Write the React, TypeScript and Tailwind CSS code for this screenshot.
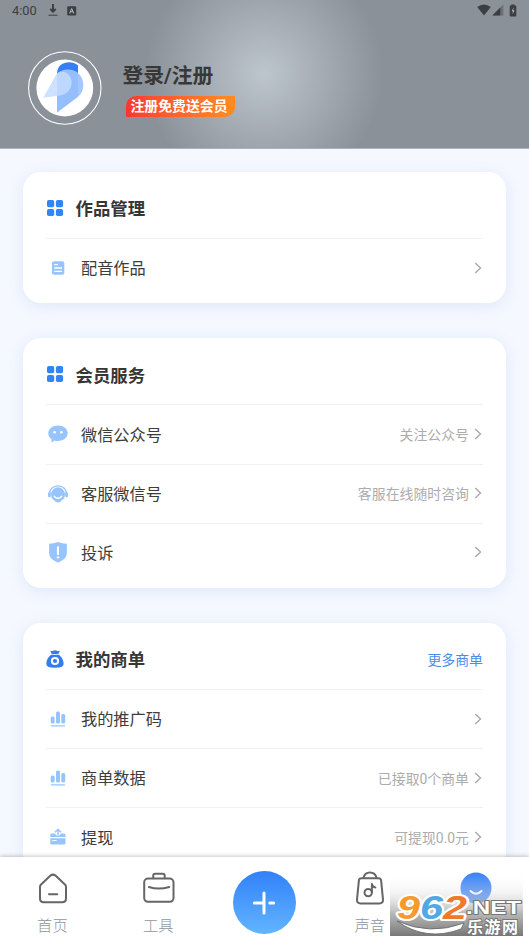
import { ReactNode } from 'react';

type IconProps = { className?: string };

const BLUE = '#2f86fb';
const LIGHT = '#98c4fd';

function GridIcon() {
  return (
    <svg width="18" height="18" viewBox="0 0 18 18" fill={BLUE} className="-mt-0.5">
      <rect x="1" y="1" width="7.2" height="7.2" rx="1.8" />
      <rect x="9.9" y="1" width="7.2" height="7.2" rx="1.8" />
      <rect x="1" y="9.9" width="7.2" height="7.2" rx="1.8" />
      <rect x="9.9" y="9.9" width="7.2" height="7.2" rx="1.8" />
    </svg>
  );
}

function MoneyBagIcon() {
  return (
    <svg width="18" height="18" viewBox="0 0 18 18" className="-mt-0.5">
      <path d="M4.2 .8Q6 1.3 7 .8Q9 -.1 11 .8Q12 1.3 14 .8L12.3 4H5.7Z" fill="#347df0" />
      <path d="M5.2 4.8H12.8C15.6 6.6 17.8 10.5 17.6 14.2Q17.5 17.8 9 17.8T.4 14.2C.2 10.5 2.4 6.6 5.2 4.8Z" fill="#347df0" />
      <circle cx="9" cy="11" r="3.1" fill="none" stroke="#fff" strokeWidth="2" />
    </svg>
  );
}

function DocIcon() {
  return (
    <svg width="20" height="20" viewBox="0 0 20 20" className="-mt-px">
      <rect x="4" y="3.2" width="12.3" height="13.6" rx="2" fill={LIGHT} />
      <path d="M6.2 6.6H9.8M6.2 10H14M6.2 13.3H14" stroke="#fff" strokeWidth="1.3" />
    </svg>
  );
}

function ChatIcon() {
  return (
    <svg width="20" height="20" viewBox="0 0 20 20">
      <path d="M10 1.6C15.5 1.6 19.7 5 19.7 9.3S15.5 17 10 17Q8.2 17 6.6 16.5L3.3 18.5L3.6 15.2Q.3 12.9 .3 9.3C.3 5 4.5 1.6 10 1.6Z" fill={LIGHT} />
      <circle cx="6.6" cy="8.3" r="1.3" fill="#fff" />
      <circle cx="13.4" cy="8.3" r="1.3" fill="#fff" />
    </svg>
  );
}

function ServiceIcon() {
  return (
    <svg width="20" height="20" viewBox="0 0 20 20">
      <path d="M1.5 10.5C1.2 5.2 5 1.8 10 1.8S18.8 5.2 18.5 10.5" fill="none" stroke={LIGHT} strokeWidth="1.3" />
      <rect x="0" y="8.3" width="2.8" height="5" rx="1.2" fill={LIGHT} />
      <rect x="17.2" y="8.3" width="2.8" height="5" rx="1.2" fill={LIGHT} />
      <path d="M10 3.2A7.2 7.2 0 0 1 17 10.4Q17 14.2 13.8 16.3Q12.6 18.5 10 18.5T6.2 16.3Q3 14.2 3 10.4A7.2 7.2 0 0 1 10 3.2Z" fill={LIGHT} />
      <path d="M6.4 12.4Q10 16.2 13.6 12.4" fill="none" stroke="#fff" strokeWidth="1.5" strokeLinecap="round" />
    </svg>
  );
}

function ShieldIcon() {
  return (
    <svg width="20" height="22" viewBox="0 0 20 22" className="-mt-0.5">
      <path d="M10 .9Q14 2.5 18.9 2.8V11.5C18.9 16.5 15.2 19.7 10 21.4C4.8 19.7 1.1 16.5 1.1 11.5V2.8Q6 2.5 10 .9Z" fill={LIGHT} />
      <rect x="8.9" y="5.2" width="2.1" height="8.8" rx=".8" fill="#fff" />
      <circle cx="10" cy="16.4" r="1.2" fill="#fff" />
    </svg>
  );
}

function ChartIcon() {
  return (
    <svg width="20" height="20" viewBox="0 0 20 20" fill={LIGHT} className="-mt-px">
      <rect x="2.7" y="7.4" width="3.9" height="7.2" rx="1.5" />
      <rect x="8" y="2.5" width="4" height="12.1" rx="1.5" />
      <rect x="13.3" y="5" width="3.9" height="9.6" rx="1.5" />
      <rect x="2.7" y="16.3" width="14.4" height="1.2" rx=".4" />
    </svg>
  );
}

function WithdrawIcon() {
  return (
    <svg width="20" height="20" viewBox="0 0 20 20" className="-mt-px">
      <path d="M2.3 10V7.8Q2.3 6.4 3.8 6.4H7.5V7.5Q10 10.2 12.5 7.5V6.4H16Q17.5 6.4 17.5 7.8V10Z" fill={LIGHT} />
      <path d="M10 8.5V3M6.9 5.3L10 2.4L13.1 5.3" fill="none" stroke={LIGHT} strokeWidth="1.4" />
      <path d="M2.3 11.3H17.5V16.2Q17.5 17.6 16 17.6H3.8Q2.3 17.6 2.3 16.2Z" fill={LIGHT} />
      <path d="M4.3 13.5H8.6" stroke="#fff" strokeWidth="1" />
    </svg>
  );
}

function Chevron() {
  return (
    <svg width="8" height="12" viewBox="0 0 8 12" className="-mt-px mr-px ml-[5px]">
      <path d="M1.2 1L6.5 6L1.2 11" fill="none" stroke="#a9a9a9" strokeWidth="1.4" />
    </svg>
  );
}

interface RowData {
  label: string;
  icon: ReactNode;
  value?: string;
}

interface SectionProps {
  title: string;
  icon: ReactNode;
  rows: RowData[];
  action?: string;
}

function Section({ title, icon, rows, action }: SectionProps) {
  return (
    <section className="rounded-[18px] bg-white px-[23px] pb-[5.8px] shadow-[0_3px_16px_rgba(70,115,220,0.13)]">
      <div className="flex h-[66.2px] items-center pt-[7.5px]">
        <span className="flex w-[18px] shrink-0">{icon}</span>
        <h2 className="ml-[11.5px] flex-1 pt-px text-[17.4px] leading-6 font-bold text-[#363636]">{title}</h2>
        {action && <a className="text-[13.9px] leading-5 text-[#4a8ce6]">{action}</a>}
      </div>
      {rows.map((row) => (
        <div key={row.label} className="flex h-[59.2px] items-center border-t border-[#f1f1f1]">
          <span className="ml-0.5 flex w-5 shrink-0 justify-center">{row.icon}</span>
          <span className="ml-[13px] flex-1 pt-[2.4px] text-[16.2px] leading-6 text-[#3c3c3c]">{row.label}</span>
          {row.value && <span className="pt-px text-[13.9px] leading-5 text-[#acacac]">{row.value}</span>}
          <Chevron />
        </div>
      ))}
    </section>
  );
}

function StatusBar() {
  return (
    <div className="flex h-[22px] items-center px-3 text-[#3b3e42]">
      <span className="font-[Roboto] text-[12.8px] leading-none">4:00</span>
      <svg width="10" height="12" viewBox="0 0 10 12" className="-mt-0.5 ml-[11px]">
        <path d="M5 0V7M2.3 5L5 7.7L7.7 5" fill="none" stroke="currentColor" strokeWidth="1.9" />
        <path d="M.5 11.2H9.5" stroke="currentColor" />
      </svg>
      <svg width="10" height="10" viewBox="0 0 10 10" className="-mt-px ml-[9px]">
        <rect x=".2" y=".2" width="9" height="9.2" rx="1.2" fill="currentColor" />
        <path d="M2.6 7.5L4.7 2.5L6.8 7.5M3.4 5.8H6" fill="none" stroke="#b6bbc0" />
      </svg>
      <div className="-mt-0.5 ml-auto flex items-center">
        <svg width="14" height="12" viewBox="0 0 14 12">
          <path d="M.2 3Q7 -2.2 13.8 3L7 11.5Z" fill="currentColor" />
        </svg>
        <svg width="12" height="12" viewBox="0 0 12 12" className="ml-px">
          <path d="M.3 11.5L11.3 .5V11.5Z" fill="#6c7178" />
          <path d="M.3 11.5L8.3 3.5V11.5Z" fill="currentColor" />
        </svg>
        <svg width="8" height="13" viewBox="0 0 8 13" className="ml-[5px]">
          <path d="M2.2 .4H5.5V1.5H6.5Q7.3 1.5 7.3 2.3V11.5Q7.3 12.4 6.4 12.4H1.5Q.7 12.4 .7 11.5V2.3Q.7 1.5 1.5 1.5H2.2Z" fill="currentColor" />
          <path d="M4.7 3.5L2.7 7.3H4L3.4 10.3L5.5 6.4H4.2Z" fill="#c0c4c8" />
        </svg>
      </div>
    </div>
  );
}

function Avatar() {
  return (
    <svg width="74" height="74" viewBox="0 0 74 74">
      <circle cx="36.8" cy="37" r="36.2" fill="none" stroke="#fff" strokeWidth="1.1" />
      <circle cx="36.8" cy="37" r="28.4" fill="#fff" />
      <path d="M29 30V22C29.5 14.5 35 11.2 41 11.2Q46 11.2 50 14.5V30Z" fill="#347ff6" />
      <path d="M29 61.5V22.5C37 16 49 17.5 53.8 27C57 35 55 42 49 46.5Z" fill="#a3c7fe" />
      <path d="M29 22.5Q38 16.5 50 21.5V45.8L29 61.5Z" fill="#8fbafc" opacity=".7" />
      <path d="M15.3 46.7L26.3 27C27.5 24.5 29 22.5 30.5 21.5C37 19 43.7 24 43.7 31.5Q43.2 42.5 32 44.5Z" fill="#c6dcff" opacity=".85" />
    </svg>
  );
}

function HomeIcon() {
  return (
    <svg width="32" height="34" viewBox="0 0 32 34" fill="none" stroke="#666" strokeWidth="2" strokeLinecap="round" strokeLinejoin="round">
      <path d="M13.5 3.6Q16 1.7 18.5 3.6L28.2 12.7Q29 13.5 29 15V26.5Q29 30.3 25.2 30.3H6.8Q3 30.3 3 26.5V15Q3 13.5 3.8 12.7Z" />
      <path d="M12 22.2H20.3" />
    </svg>
  );
}

function ToolIcon() {
  return (
    <svg width="34" height="34" viewBox="0 0 34 34" fill="none" stroke="#666" strokeWidth="2" strokeLinecap="round">
      <rect x="2.2" y="6.5" width="29.3" height="23.3" rx="3.8" />
      <path d="M11.2 6.2V3.7Q11.2 1.7 13.2 1.7H20.7Q22.7 1.7 22.7 3.7V6.2" />
      <path d="M6.9 15Q16.8 18.2 27.2 15" />
    </svg>
  );
}

function SoundIcon() {
  return (
    <svg width="32" height="36" viewBox="0 0 32 36" fill="none" stroke="#666" strokeWidth="2" strokeLinecap="round" strokeLinejoin="round">
      <path d="M7.5 7.2H24.5Q26.8 7.2 27.1 9.4L29 28.5Q29.2 32.4 25.5 32.4H6.5Q2.8 32.4 3 28.5L4.9 9.4Q5.2 7.2 7.5 7.2Z" />
      <path d="M9.5 6.8C11 -.4 21 -.4 22.5 6.8" />
      <circle cx="14.2" cy="21.6" r="3.7" />
      <path d="M17.9 21.3V13Q18.4 16 21.4 16.6" />
    </svg>
  );
}

function NavItem({ label, children }: { label: string; children: ReactNode }) {
  return (
    <div className="flex flex-1 flex-col items-center">
      <div className="flex h-9 items-center">{children}</div>
      <span className="mt-[7px] mr-px text-[15.3px] leading-6 font-light text-[#9096a0]">{label}</span>
    </div>
  );
}

function SiteStamp({ className }: IconProps) {
  return (
    <svg width="139" height="64" viewBox="0 0 139 64" className={className}>
      <defs>
        <linearGradient id="stampShade" x1="0" y1="0" x2="0" y2="1">
          <stop offset="0" stopColor="#fff" stopOpacity="0" />
          <stop offset=".33" stopColor="#e0e0e0" stopOpacity=".4" />
          <stop offset=".65" stopColor="#aaa" stopOpacity=".85" />
          <stop offset="1" stopColor="#777" />
        </linearGradient>
      </defs>
      <rect width="133" height="64" fill="url(#stampShade)" />
      <path d="M7 49Q40 64 74 51L71 57Q36 70 7 49Z" fill="#fff" stroke="#666" strokeWidth=".8" />
      <g fontFamily="Liberation Sans, sans-serif" fontWeight="700" paintOrder="stroke" strokeLinejoin="round">
        <g fontSize="34" fontStyle="italic" stroke="#fff" strokeWidth="4">
          <text x="7" y="47" textLength="23" lengthAdjust="spacingAndGlyphs" fill="#f69a2c">9</text>
          <text x="30" y="47" textLength="23" lengthAdjust="spacingAndGlyphs" fill="#4fa9e2">6</text>
          <text x="53" y="47" textLength="24" lengthAdjust="spacingAndGlyphs" fill="#f2782a">2</text>
        </g>
        <text x="76" y="41.5" fontSize="18.5" textLength="55" lengthAdjust="spacingAndGlyphs" fill="#fff" stroke="#777" strokeWidth="2">.NET</text>
      </g>
      <text x="77" y="60.5" fontFamily="Noto Sans CJK SC, sans-serif" fontSize="16" fontWeight="700" textLength="51" fill="#fff" stroke="#777" strokeWidth="2" paintOrder="stroke">乐游网</text>
    </svg>
  );
}

const works: RowData[] = [{ label: '配音作品', icon: <DocIcon /> }];

const services: RowData[] = [
  { label: '微信公众号', icon: <ChatIcon />, value: '关注公众号' },
  { label: '客服微信号', icon: <ServiceIcon />, value: '客服在线随时咨询' },
  { label: '投诉', icon: <ShieldIcon /> },
];

const orders: RowData[] = [
  { label: '我的推广码', icon: <ChartIcon /> },
  { label: '商单数据', icon: <ChartIcon />, value: '已接取0个商单' },
  { label: '提现', icon: <WithdrawIcon />, value: '可提现0.0元' },
];

export default function App() {
  return (
    <div className="flex h-[942px] w-[529px] flex-col overflow-hidden bg-[#f5f8ff] font-['Roboto','Noto_Sans_CJK_SC',sans-serif]">
      {/* Profile header */}
      <header className="h-[149px] shrink-0 border-b border-[#a9b2be] bg-[#8a9199] bg-[radial-gradient(circle_119px_at_264px_74px,#bdc5cd,#8a9199)]">
        <StatusBar />
        <div className="flex items-center pt-[29px] pl-7">
          <Avatar />
          <div className="ml-[20.5px] pt-[4px]">
            <div className="text-[20.8px] leading-[26px] font-bold text-[#383838]">登录/注册</div>
            <div className="mt-[7px] ml-[3px] flex h-[21px] w-[109px] items-center justify-center rounded-tl-[10px] rounded-br-[10px] bg-linear-to-r from-[#fb3531] to-[#ff8b20] pr-0.5 text-[13.9px] font-bold text-white">
              注册免费送会员
            </div>
          </div>
        </div>
      </header>

      {/* Menu sections */}
      <main className="flex min-h-0 flex-1 flex-col gap-[35px] overflow-hidden px-[23px] pt-[23px] *:shrink-0">
        <Section title="作品管理" icon={<GridIcon />} rows={works} />
        <Section title="会员服务" icon={<GridIcon />} rows={services} />
        <Section title="我的商单" icon={<MoneyBagIcon />} rows={orders} action="更多商单" />
      </main>

      {/* Bottom tabs */}
      <nav className="relative flex h-[85px] shrink-0 bg-white pt-[14px] shadow-[0_-1px_4px_rgba(0,0,0,0.22)]">
        <NavItem label="首页"><HomeIcon /></NavItem>
        <NavItem label="工具"><ToolIcon /></NavItem>
        <div className="flex flex-1 justify-center">
          <div className="flex size-[63px] items-center justify-center rounded-full bg-linear-to-b from-[#3380f9] to-[#62b5ff]">
            <svg width="24" height="24" viewBox="0 0 24 24" fill="none" stroke="#fff" strokeWidth="3" strokeLinecap="round">
              <path d="M12 2V22M2.3 12H12M17.8 12H21.7" />
            </svg>
          </div>
        </div>
        <NavItem label="声音"><SoundIcon /></NavItem>
        <div className="flex flex-1 justify-center">
          <svg width="32" height="32" viewBox="0 0 32 32" className="mt-px">
            <circle cx="16" cy="16" r="15.5" fill="#347ff8" />
            <path d="M10.5 19Q16 24.5 21.5 19" fill="none" stroke="#fff" strokeWidth="2" strokeLinecap="round" />
          </svg>
        </div>
        <SiteStamp className="absolute top-[15px] left-[390px]" />
      </nav>
    </div>
  );
}
